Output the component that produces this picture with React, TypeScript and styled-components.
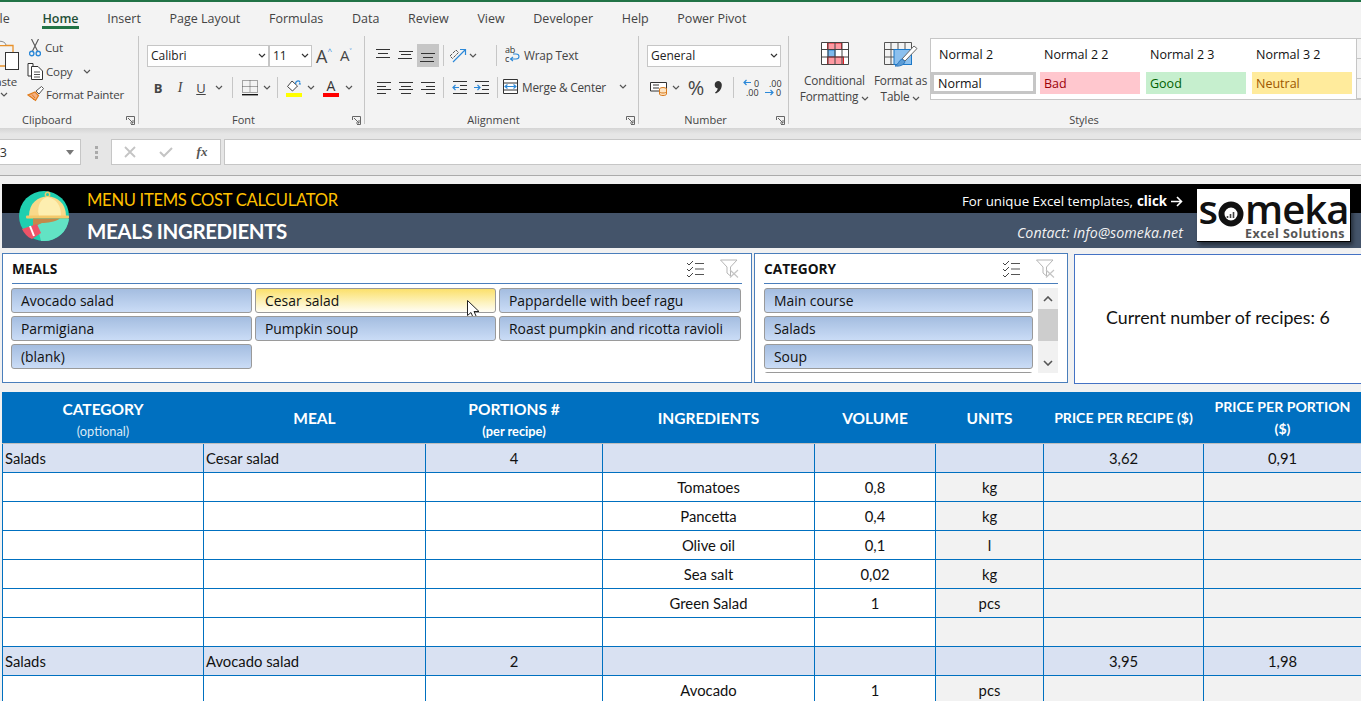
import React from 'react';
import styled, { createGlobalStyle } from 'styled-components';

const UI_FONT = '"Open Sans", "Noto Sans", sans-serif';
const SHEET_FONT = 'Lato, "Open Sans", sans-serif';
const GRID_BLUE = '#0070c0';

const GlobalStyle = createGlobalStyle`
  html, body {
    margin: 0;
    padding: 0;
    width: 1361px;
    height: 701px;
    overflow: hidden;
    background: #f1f1f1;
    font-family: ${UI_FONT};
  }
  * { box-sizing: border-box; }
`;

const Page = styled.div`
  width: 1361px;
  height: 701px;
  overflow: hidden;
`;

const TopStrip = styled.div`
  height: 2px;
  background: #217346;
`;

const Chrome = styled.div`
  width: 1400px;
  margin-left: -28px;
  background: #f3f3f3;
`;

const Tabs = styled.div`
  display: flex;
  height: 34px;
  padding-left: 18px;
`;

const Tab = styled.div<{ $active?: boolean }>`
  margin-right: 28.6px;
  padding-top: 8px;
  font-size: 12.5px;
  line-height: 18px;
  height: 27px;
  color: ${(p) => (p.$active ? '#1f4e36' : '#444')};
  font-weight: ${(p) => (p.$active ? 600 : 400)};
  border-bottom: ${(p) => (p.$active ? '3px solid #217346' : '0')};
  white-space: nowrap;
  &:first-child { margin-right: 32.6px; }
`;

const Ribbon = styled.div`
  display: flex;
  height: 92px;
  overflow: hidden;
  background: #f3f3f3;
`;

const Group = styled.div<{ $w: number; $plain?: boolean }>`
  flex: 0 0 ${(p) => p.$w}px;
  height: 88px;
  display: flex;
  flex-direction: column;
  border-right: ${(p) => (p.$plain ? '0' : '1px solid #c6c6c6')};
`;

const GroupBody = styled.div`
  flex: 1;
  min-height: 0;
`;

const GroupFoot = styled.div<{ $plain?: boolean }>`
  display: grid;
  grid-template-columns: ${(p) => (p.$plain ? '1fr' : '1fr 16px')};
  align-items: center;
  height: 16px;
  margin-bottom: -3px;
  font-size: 11px;
  color: #444;
  text-align: center;
`;

const LauncherWrap = styled.div`
  justify-self: end;
  margin: 2px 3px 0 0;
  line-height: 0;
`;

const Row = styled.div<{ $pad?: number; $top?: number }>`
  display: flex;
  align-items: center;
  height: 23px;
  padding-left: ${(p) => p.$pad ?? 0}px;
  margin-top: ${(p) => p.$top ?? 0}px;
`;

const Cell = styled.div<{ $w: number; $on?: boolean }>`
  flex: 0 0 ${(p) => p.$w}px;
  height: 23px;
  display: flex;
  align-items: center;
  justify-content: center;
  background: ${(p) => (p.$on ? '#c6c6c6' : 'transparent')};
  color: #444;
`;

const VSep = styled.div<{ $gap?: number; $right?: number }>`
  flex: 0 0 1px;
  height: 21px;
  margin-left: ${(p) => p.$gap ?? 5}px;
  margin-right: ${(p) => p.$right ?? p.$gap ?? 5}px;
  background: #c6c6c6;
`;

const Box = styled.div<{ $w: number }>`
  flex: 0 0 ${(p) => p.$w}px;
  height: 22px;
  display: flex;
  align-items: center;
  justify-content: space-between;
  padding: 0 2px 0 3px;
  background: #fff;
  border: 1px solid #c6c6c6;
  font-size: 12px;
  color: #222;
`;

const ClipBody = styled.div`
  display: flex;
  height: 100%;
`;

const PasteCol = styled.div`
  flex: 0 0 55px;
  display: flex;
  flex-direction: column;
  align-items: flex-end;
  padding: 4px 8px 0 0;
  font-size: 11.5px;
  letter-spacing: -0.2px;
  color: #444;
`;

const PasteLabel = styled.div`
  margin: 3px 2px 0 0;
  line-height: 16px;
`;

const PasteChevron = styled.div`
  align-self: flex-end;
  margin: 2px 11px 0 0;
  line-height: 0;
`;

const ClipRows = styled.div`
  display: flex;
  flex-direction: column;
`;

const ClipRow = styled.div`
  display: flex;
  align-items: center;
  height: 23.5px;
  gap: 2px;
  font-size: 11.6px;
  letter-spacing: -0.2px;
  color: #444;
  white-space: nowrap;
`;

const ClipIcon = styled.div`
  flex: 0 0 16px;
  display: flex;
  justify-content: center;
`;

const TextAction = styled.div`
  display: flex;
  align-items: center;
  gap: 4px;
  padding-bottom: 2px;
  font-size: 11.8px;
  letter-spacing: -0.2px;
  color: #444;
  white-space: nowrap;
`;

const BoldGlyph = styled.span`
  font: 700 13px ${UI_FONT};
  color: #444;
`;

const ItalicGlyph = styled.span`
  font: italic 400 14px "Liberation Serif", serif;
  color: #444;
`;

const UnderGlyph = styled.span`
  font: 400 13px ${UI_FONT};
  text-decoration: underline;
  color: #444;
`;

const ColorGlyph = styled.span<{ $bar: string }>`
  display: flex;
  flex-direction: column;
  align-items: center;
  font: 400 14px/15px ${UI_FONT};
  color: #333;
  &::after {
    content: '';
    width: 16px;
    height: 4px;
    background: ${(p) => p.$bar};
  }
`;

const SizeGlyph = styled.span<{ $size: number }>`
  display: flex;
  align-items: flex-start;
  font: 400 ${(p) => p.$size}px/1 ${UI_FONT};
  color: #444;
`;

const SizeCaret = styled.span`
  font-size: 8px;
  line-height: 8px;
  color: #2b88d8;
`;

const BigButtons = styled.div`
  display: flex;
  padding-left: 9px;
  height: 100%;
`;

const BigButton = styled.div<{ $w: number }>`
  flex: 0 0 ${(p) => p.$w}px;
  display: flex;
  flex-direction: column;
  align-items: center;
  padding-top: 6px;
  font-size: 11.8px;
  letter-spacing: -0.2px;
  line-height: 16px;
  color: #444;
  text-align: center;
  white-space: nowrap;
`;

const BigLabel = styled.div<{ $top: number }>`
  margin-top: ${(p) => p.$top}px;
`;

const Gallery = styled.div`
  flex: 0 0 432px;
  display: flex;
  height: 62px;
  margin-top: 2px;
  background: #fff;
  border: 1px solid #c6c6c6;
`;

const StyleGrid = styled.div`
  flex: 0 0 425px;
  display: grid;
  grid-template-columns: 109px 106px 106px 100px;
  grid-template-rows: 28px 22px;
  row-gap: 4px;
  align-content: start;
  padding-top: 1px;
`;

const StyleName = styled.div`
  display: flex;
  align-items: center;
  padding-left: 4px;
  font-size: 12.5px;
  color: #111;
  white-space: nowrap;
  &:first-child { padding-left: 8px; }
`;

const StyleSwatch = styled.div<{ $bg: string; $fg: string; $sel?: boolean }>`
  display: flex;
  align-items: center;
  width: ${(p) => (p.$sel ? 105 : 100)}px;
  padding-left: 4px;
  font-size: 12.5px;
  background: ${(p) => p.$bg};
  color: ${(p) => p.$fg};
  border: ${(p) => (p.$sel ? '3px solid #c6c6c6' : '0')};
`;

const GalleryScroll = styled.div`
  flex: 1;
  display: flex;
  flex-direction: column;
  background: #f3f3f3;
`;

const GalleryStep = styled.div`
  flex: 1;
  border-left: 1px solid #c6c6c6;
  border-bottom: 1px solid #c6c6c6;
`;

const FormulaBar = styled.div`
  display: flex;
  align-items: flex-start;
  height: 48px;
  padding-top: 11px;
  background: linear-gradient(#d4d4d4 0, #e6e6e6 6px);
  border-bottom: 1px solid #ababab;
`;

const NameBox = styled.div`
  flex: 0 0 109px;
  height: 26px;
  display: flex;
  align-items: center;
  justify-content: space-between;
  padding: 0 6px 0 19px;
  background: #fff;
  border: 1px solid #c6c6c6;
  font-size: 12.5px;
  color: #333;
`;

const DotsCell = styled.div`
  flex: 0 0 30px;
  height: 26px;
  display: flex;
  align-items: center;
  justify-content: center;
`;

const FxBox = styled.div`
  flex: 0 0 110px;
  height: 26px;
  display: grid;
  grid-template-columns: repeat(3, 36px);
  align-items: center;
  justify-items: center;
  background: #fff;
  border: 1px solid #c6c6c6;
`;

const FxGlyph = styled.span`
  font: italic 700 13px "Liberation Serif", serif;
  color: #555;
`;

const FormulaInput = styled.div`
  flex: 1;
  height: 26px;
  margin-left: 3px;
  background: #fff;
  border: 1px solid #c6c6c6;
`;

const Sheet = styled.div`
  padding: 8px 0 0 2px;
  width: 1361px;
  background: #f1f1f1;
`;

const Banner = styled.div`
  position: relative;
  width: 1359px;
`;

const BannerRow = styled.div<{ $dark?: boolean; $h: number }>`
  display: flex;
  align-items: center;
  justify-content: space-between;
  height: ${(p) => p.$h}px;
  padding: 0 178px 0 85px;
  background: ${(p) => (p.$dark ? '#000' : '#44546a')};
`;

const AppName = styled.div`
  margin-top: 2px;
  font: 400 16.6px ${SHEET_FONT};
  color: #ffc000;
  letter-spacing: -0.3px;
`;

const PageTitle = styled.div`
  font: 700 20.5px ${SHEET_FONT};
  color: #fff;
  letter-spacing: -0.4px;
`;

const Promo = styled.div`
  display: flex;
  align-items: center;
  gap: 4px;
  margin-top: 5px;
  font: 400 13.3px ${UI_FONT};
  color: #fff;
  b { font-weight: 700; }
`;

const Contact = styled.div`
  margin-top: 3px;
  font: italic 400 14.2px ${UI_FONT};
  letter-spacing: 0.1px;
  color: #f2f2f2;
`;

const BadgeIcon = styled.div`
  position: absolute;
  left: 17px;
  top: 7px;
  width: 50px;
  height: 50px;
`;

const Logo = styled.div`
  position: absolute;
  right: 10px;
  top: 5px;
  width: 154px;
  height: 53px;
  display: flex;
  flex-direction: column;
  align-items: center;
  background: #fff;
  border-right: 1px solid #000;
  border-bottom: 1px solid #000;
  box-shadow: 2px 3px 4px rgba(0, 0, 0, 0.45);
`;

const LogoWord = styled.div`
  display: flex;
  align-items: center;
  height: 38px;
  padding-top: 2px;
  font: 600 40px/36px "Open Sans", sans-serif;
  color: #111;
  letter-spacing: -1px;
`;

const LogoRing = styled.div`
  margin: 10px 1px 0;
  line-height: 0;
`;

const LogoSub = styled.div`
  align-self: flex-end;
  padding-right: 5px;
  font: 700 12.5px/14px "Open Sans", sans-serif;
  color: #555;
  letter-spacing: 0.45px;
`;

const SlicerRow = styled.div`
  display: flex;
  margin-top: 5px;
  height: 131px;
`;

const Panel = styled.div<{ $w: number; $gap: number }>`
  flex: 0 0 ${(p) => p.$w}px;
  height: 130px;
  margin-right: ${(p) => p.$gap}px;
  padding: 0 9px;
  background: #fff;
  border: 1px solid #4a7ebb;
`;

const PanelHead = styled.div`
  display: flex;
  align-items: center;
  justify-content: space-between;
  height: 30px;
  border-bottom: 1px solid #4a7ebb;
`;

const PanelTitle = styled.div`
  font: 700 13.7px ${UI_FONT};
  color: #111;
`;

const PanelTools = styled.div`
  display: flex;
  align-items: center;
  gap: 15px;
  padding-right: 3px;
`;

const MealGrid = styled.div`
  display: grid;
  grid-template-columns: 241px 241px 242px;
  grid-auto-rows: 25px;
  gap: 3px;
  margin: 4px 0 0 -1px;
`;

const SlicerItem = styled.div<{ $on?: boolean }>`
  position: relative;
  flex: 0 0 25px;
  display: flex;
  align-items: center;
  height: 25px;
  padding-left: 9px;
  border: 1px solid #9a9a9a;
  border-radius: 3px;
  background: ${(p) =>
    p.$on ? 'linear-gradient(#fbe06b, #fdf3c0 60%, #fffdf5)' : 'linear-gradient(#a4bde0, #cadcf6)'};
  font-size: 13.9px;
  color: #111;
  white-space: nowrap;
`;

const Pointer = styled.div`
  position: absolute;
  left: 211px;
  top: 11px;
  line-height: 0;
`;

const CatBody = styled.div`
  display: flex;
  gap: 5px;
  margin-top: 4px;
`;

const CatList = styled.div`
  flex: 0 0 269px;
  height: 85px;
  overflow: hidden;
  display: flex;
  flex-direction: column;
  gap: 3px;
`;

const ScrollTrack = styled.div`
  flex: 0 0 20px;
  height: 85px;
  display: flex;
  flex-direction: column;
  align-items: center;
  background: #f1f1f1;
`;

const ScrollArrow = styled.div`
  flex: 0 0 21px;
  display: flex;
  align-items: center;
  justify-content: center;
`;

const ScrollThumb = styled.div`
  align-self: stretch;
  flex: 0 0 32px;
  background: #cdcdcd;
`;

const ScrollGap = styled.div`
  flex: 1;
`;

const CountPanel = styled.div`
  flex: 0 0 320px;
  height: 130px;
  margin-top: 1px;
  display: flex;
  align-items: center;
  padding: 0 0 4px 31px;
  background: #fff;
  border: 1px solid #4472c4;
  font: 400 17.8px ${SHEET_FONT};
  color: #111;
  white-space: nowrap;
`;

const Table = styled.table`
  width: 1359px;
  margin-top: 8px;
  table-layout: fixed;
  border-collapse: collapse;
  font-family: ${SHEET_FONT};
`;

const Th = styled.th<{ $small?: boolean }>`
  height: 51px;
  padding: ${(p) => (p.$small ? '0' : '1px')} 0 0;
  background: ${GRID_BLUE};
  border: 1px solid ${GRID_BLUE};
  border-bottom: 1px solid #bfbfbf;
  color: #fff;
  font-size: ${(p) => (p.$small ? 14.1 : 15.5)}px;
  font-weight: 700;
  line-height: ${(p) => (p.$small ? 22 : 19)}px;
  text-align: center;
  vertical-align: middle;
`;

const ThNote = styled.div<{ $bold?: boolean }>`
  margin-top: 5px;
  font-size: 12.8px;
  line-height: 14px;
  font-weight: ${(p) => (p.$bold ? 700 : 400)};
  color: ${(p) => (p.$bold ? '#fff' : '#dbe9f6')};
`;

const Tr = styled.tr`
  height: 29px;
`;

const Td = styled.td<{ $head?: boolean; $shade?: boolean; $left?: boolean }>`
  height: 29px;
  padding: 4px ${(p) => (p.$left ? '2px' : '0')} 0;
  border: 1px solid ${GRID_BLUE};
  background: ${(p) => (p.$head ? '#d9e1f2' : p.$shade ? '#f2f2f2' : '#fff')};
  font-size: 14.8px;
  line-height: 20px;
  color: #111;
  text-align: ${(p) => (p.$left ? 'left' : 'center')};
  vertical-align: top;
  white-space: nowrap;
`;

const Chev = ({ c = '#555' }: { c?: string }) => (
  <svg width="8" height="5" viewBox="0 0 8 5">
    <path d="M1 1l3 3 3-3" fill="none" stroke={c} strokeWidth="1.2" />
  </svg>
);

const Launcher = () => (
  <LauncherWrap>
    <svg width="9" height="9" viewBox="0 0 9 9">
      <path d="M.5 4V.5H8.500V8.500H5M2 2l5 5M7 4v3H4" fill="none" stroke="#666" strokeWidth="1" />
    </svg>
  </LauncherWrap>
);

// each bar: [x1, x2, y]
const Bars = ({ bars, w = 16, h = 16 }: { bars: number[][]; w?: number; h?: number }) => (
  <svg width={w} height={h} viewBox={`0 0 ${w} ${h}`}>
    {bars.map((b, i) => (
      <rect key={i} x={b[0]} y={b[2]} width={b[1] - b[0]} height="1" fill="#333" />
    ))}
  </svg>
);

const PasteIcon = () => (
  <svg width="36" height="31" viewBox="0 0 36 31">
    <path d="M4 5.500H30V12M4 5V26H22" fill="none" stroke="#e8912a" strokeWidth="1.3" />
    <path d="M11 5c1-5 11-5 12 0" fill="#f3f3f3" stroke="#8a8a8a" />
    <rect x="22.500" y="12.500" width="13" height="17" fill="#fff" stroke="#333" />
  </svg>
);

const ScissorsIcon = () => (
  <svg width="12" height="18" viewBox="0 0 12 18">
    <path d="M2.500 0l6 12M9.500 0l-6 12" stroke="#555" strokeWidth="1.1" fill="none" />
    <circle cx="2.700" cy="14.500" r="2.200" fill="none" stroke="#2b88d8" strokeWidth="1.4" />
    <circle cx="9.300" cy="14.500" r="2.200" fill="none" stroke="#2b88d8" strokeWidth="1.4" />
  </svg>
);

const CopyIcon = () => (
  <svg width="17" height="17" viewBox="0 0 17 17">
    <path d="M6 3.500V.5H1V13H4" fill="#fff" stroke="#333" />
    <path d="M4.500 3.500H11L15.500 8V16.500H4.500Z" fill="#fff" stroke="#333" />
    <path d="M7 9h6M7 11.500h6M7 14h6" stroke="#555" />
  </svg>
);

const BrushIcon = () => (
  <svg width="17" height="17" viewBox="0 0 17 17">
    <path d="M8 6l3.500 3.500-3 5L1 9Z" fill="#f4b183" stroke="#e07b1a" strokeWidth="1.2" />
    <path d="M3 10l4 4M5 8.500l3 3.500" stroke="#e07b1a" />
    <path d="M9 5l5.500-4.500L16.500 2.500 12 8Z" fill="#fff" stroke="#555" />
  </svg>
);

const BordersIcon = () => (
  <svg width="16" height="16" viewBox="0 0 16 16">
    <path d="M.5.5H15.500V12.500H.5ZM8 .5V12.500M.5 6.500H15.500" fill="none" stroke="#555" strokeDasharray="1 1" />
    <rect x="0" y="14" width="16" height="1.400" fill="#111" />
  </svg>
);

const BucketIcon = () => (
  <svg width="16" height="18" viewBox="0 0 16 18">
    <path d="M6 2L1.500 7.500 6.500 12 11.500 7Z" fill="#fff" stroke="#444" />
    <path d="M9.500 5c0-3 3-4 4.500-2" fill="none" stroke="#2b88d8" strokeWidth="1.3" />
    <path d="M12.500 5.500l1.500-2.500 1 2.500Z" fill="#2b88d8" />
    <rect x="0" y="14" width="16" height="4" fill="#ffff00" />
  </svg>
);

const OrientIcon = () => (
  <svg width="18" height="18" viewBox="0 0 18 18">
    <path d="M1 9l6-6 2.500 2.500-6 6Z" fill="none" stroke="#555" strokeDasharray="3 1" />
    <path d="M4 15L16 3M11 2.500h5.500V8" fill="none" stroke="#2b88d8" strokeWidth="1.2" />
  </svg>
);

const IndentIcon = ({ out }: { out?: boolean }) => (
  <svg width="15" height="13" viewBox="0 0 15 13">
    <path d="M1 .5H15M8 4.500H15M8 8.500H15M1 12.500H15" stroke="#333" />
    {out ? (
      <path d="M7 6.500H1M3.500 4L1 6.500 3.500 9" fill="none" stroke="#2b88d8" strokeWidth="1.2" />
    ) : (
      <path d="M0 6.500H6M3.500 4L6 6.500 3.500 9" fill="none" stroke="#2b88d8" strokeWidth="1.2" />
    )}
  </svg>
);

const WrapIcon = () => (
  <svg width="15" height="17" viewBox="0 0 15 17">
    <text x="0" y="7" fontSize="9" fill="#333" fontFamily="Open Sans">ab</text>
    <text x="0" y="16" fontSize="9" fill="#333" fontFamily="Open Sans">c</text>
    <path d="M6 13h5c4 0 4-5 0-5H8M8 11l-2.500 2L8 15" fill="none" stroke="#2b88d8" strokeWidth="1.1" />
  </svg>
);

const MergeIcon = () => (
  <svg width="15" height="15" viewBox="0 0 15 15">
    <path d="M.5.5H14.500V14.500H.5Z" fill="#fff" stroke="#333" />
    <path d="M.5 4H14.500M.5 11H14.500" stroke="#333" />
    <path d="M2 7.500H13M4.500 5.500L2 7.500l2.500 2M10.500 5.500L13 7.500l-2.500 2" fill="none" stroke="#2b88d8" strokeWidth="1.1" />
  </svg>
);

const AccountingIcon = () => (
  <svg width="18" height="16" viewBox="0 0 18 16">
    <path d="M.5 2.500H16.500V11H.5Z" fill="#fff" stroke="#333" />
    <path d="M3 5H9M3 8H9" stroke="#333" />
    <ellipse cx="13" cy="9" rx="3.500" ry="1.500" fill="#fce4c4" stroke="#d9791a" />
    <path d="M9.500 9V14c0 2 7 2 7 0V9M9.500 11.500c0 2 7 2 7 0" fill="#fce4c4" stroke="#d9791a" />
  </svg>
);

const CommaIcon = () => (
  <svg width="8" height="13" viewBox="0 0 8 13">
    <path d="M4 0a3.800 3.800 0 0 1 3.800 4c0 4-3 7.500-6 8.500L1 11.500c1.500-1 2.500-2.500 2.800-4A3.800 3.800 0 0 1 4 0Z" fill="#333" />
  </svg>
);

const DecimalIcon = ({ more }: { more?: boolean }) => (
  <svg width="17" height="17" viewBox="0 0 17 17">
    {more ? (
      <path d="M8 3.500H1M3.500 1L1 3.500 3.500 6" fill="none" stroke="#2b88d8" strokeWidth="1.2" />
    ) : (
      <path d="M0 13.500H8M5.500 11L8 13.500 5.500 16" fill="none" stroke="#2b88d8" strokeWidth="1.2" />
    )}
    <text x={more ? 11 : 4} y="7.500" fontSize="9" fill="#333" fontFamily="Open Sans">{more ? '0' : '.00'}</text>
    <text x={more ? 3 : 11} y="16.500" fontSize="9" fill="#333" fontFamily="Open Sans">{more ? '.00' : '0'}</text>
  </svg>
);

const TableCells = ({ fills }: { fills: React.ReactNode }) => (
  <svg width="28" height="23" viewBox="0 0 28 23">
    <rect x=".5" y=".5" width="27" height="22" fill="#fff" />
    {fills}
    <path d="M.5.5H27.500V22.500H.5ZM.5 7.500H27.500M.5 15H27.500M7 .5V22.500M14 .5V22.500M21 .5V22.500" fill="none" stroke="#444" />
  </svg>
);

const CondFormatIcon = () => (
  <TableCells
    fills={
      <>
        <rect x="6.500" y="1" width="14" height="6.500" fill="#ff9aa2" stroke="#e01f26" />
        <rect x="7" y="8" width="7" height="7" fill="#7db9ec" stroke="#2b88d8" />
        <rect x="6.500" y="15" width="16" height="7.500" fill="#ff9aa2" stroke="#e01f26" />
      </>
    }
  />
);

const FormatTableIcon = () => (
  <svg width="34" height="26" viewBox="0 0 34 26">
    <path d="M.5.5H27.500V22.500H.5ZM.5 7.500H27.500M.5 15H27.500M7 .5V22.500M14 .5V22.500M21 .5V22.500" fill="none" stroke="#555" />
    <rect x="10" y="7.500" width="17.500" height="15" fill="#8cc0ee" stroke="#1b78c8" />
    <path d="M18 17L30 4l3 2.500L21 19Z" fill="#fff" stroke="#666" />
    <path d="M18 17l3 2.500c-1 4-6 5-10 4.500 3-1 4-6 7-7Z" fill="#5b9bd5" stroke="#2b78c0" />
  </svg>
);

const ChecklistIcon = () => (
  <svg width="19" height="17" viewBox="0 0 19 17">
    <path d="M1 3l2 2 4-4M1 9l2 2 4-4M1 15l2 2 4-4" fill="none" stroke="#444" />
    <path d="M9 3.500H18M9 9H18M9 14.500H18" stroke="#555" strokeWidth="1.1" />
  </svg>
);

const ClearFilterIcon = () => (
  <svg width="19" height="19" viewBox="0 0 19 19">
    <path d="M.5 1H17L10.500 8V17L7 14V8Z" fill="none" stroke="#b5b5b5" />
    <path d="M10 11l8 7.500M18 11l-8 7.500" stroke="#c4c4c4" strokeWidth="1.2" />
  </svg>
);

const ArrowRight = () => (
  <svg width="12" height="11" viewBox="0 0 12 11">
    <path d="M0 5.500H10.500M6 1l4.500 4.500L6 10" fill="none" stroke="#fff" strokeWidth="1.6" />
  </svg>
);

const CursorIcon = () => (
  <svg width="14" height="20" viewBox="0 0 14 20">
    <path d="M.5.5V15.500L4 12.500 6.500 18.500 9.500 17 7 11.500H12Z" fill="#fff" stroke="#222" />
  </svg>
);

const ClocheBadge = () => (
  <svg width="50" height="50" viewBox="0 0 50 50">
    <circle cx="25" cy="25" r="25" fill="#1fcfb0" />
    <path d="M25 50A25 25 0 0 0 50 28H30L18 34 22 50Z" fill="#62e3c4" />
    <circle cx="28.500" cy="3.500" r="2.200" fill="none" stroke="#f0c868" strokeWidth="1.400" />
    <path d="M10 25C10 12 19 5.500 28.500 5.500S47 12 47 25Z" fill="#f9d98a" />
    <path d="M20 25C17 14 23 7 28.500 6 38 8 42 15 42 25Z" fill="#fdeeb0" />
    <rect x="7" y="24.500" width="43" height="3" rx="1" fill="#f5c96a" />
    <path d="M14 27.500H41C36 31 28 32 23 32L14 36Z" fill="#c4894a" />
    <path d="M3 38l15-5 4 9-9 6C8 46 5 42 3 38Z" fill="#ee5367" />
    <path d="M11 35l4 10" stroke="#fff" strokeWidth="2" />
  </svg>
);

const LogoO = () => (
  <LogoRing>
    <svg width="26" height="26" viewBox="0 0 26 26">
      <circle cx="13" cy="13" r="9.500" fill="none" stroke="#111" strokeWidth="6" />
      <path d="M9.500 17v-2M12.500 17v-4M15.500 17v-6" stroke="#444" strokeWidth="1.600" />
    </svg>
  </LogoRing>
);

const ALIGN_TOP = [[0, 14, 1], [2, 12, 5], [0, 14, 9]];
const ALIGN_MID = [[1, 15, 3], [3, 13, 6], [0, 14, 10]];
const ALIGN_BOT = [[1, 15, 5], [3, 13, 9], [0, 14, 13]];
const H_LEFT = [[1, 15, 2], [1, 10, 6], [1, 15, 9], [1, 10, 13]];
const H_CENTER = [[1, 15, 2], [3, 13, 6], [1, 15, 9], [3, 13, 13]];
const H_RIGHT = [[1, 15, 2], [6, 15, 6], [1, 15, 9], [6, 15, 13]];

const MEALS = [
  'Avocado salad',
  'Cesar salad',
  'Pappardelle with beef ragu',
  'Parmigiana',
  'Pumpkin soup',
  'Roast pumpkin and ricotta ravioli',
  '(blank)',
];

const CATEGORIES = ['Main course', 'Salads', 'Soup', ''];

const COLUMN_WIDTHS = [201, 222, 177, 212, 121, 108, 160, 158];

type RecipeRow = string[];

const ROWS: RecipeRow[] = [
  ['Salads', 'Cesar salad', '4', '', '', '', '3,62', '0,91'],
  ['', '', '', 'Tomatoes', '0,8', 'kg', '', ''],
  ['', '', '', 'Pancetta', '0,4', 'kg', '', ''],
  ['', '', '', 'Olive oil', '0,1', 'l', '', ''],
  ['', '', '', 'Sea salt', '0,02', 'kg', '', ''],
  ['', '', '', 'Green Salad', '1', 'pcs', '', ''],
  ['', '', '', '', '', '', '', ''],
  ['Salads', 'Avocado salad', '2', '', '', '', '3,95', '1,98'],
  ['', '', '', 'Avocado', '1', 'pcs', '', ''],
];

const STYLE_NAMES = ['Normal 2', 'Normal 2 2', 'Normal 2 3', 'Normal 3 2'];

export default function App() {
  return (
    <Page>
      <GlobalStyle />
      <TopStrip />
      <Chrome>
        <Tabs>
          <Tab>File</Tab>
          <Tab $active>Home</Tab>
          <Tab>Insert</Tab>
          <Tab>Page Layout</Tab>
          <Tab>Formulas</Tab>
          <Tab>Data</Tab>
          <Tab>Review</Tab>
          <Tab>View</Tab>
          <Tab>Developer</Tab>
          <Tab>Help</Tab>
          <Tab>Power Pivot</Tab>
        </Tabs>

        <Ribbon>
          <Group $w={167}>
            <GroupBody>
              <ClipBody>
                <PasteCol>
                  <PasteIcon />
                  <PasteLabel>Paste</PasteLabel>
                  <PasteChevron><Chev /></PasteChevron>
                </PasteCol>
                <ClipRows>
                  <ClipRow><ClipIcon><ScissorsIcon /></ClipIcon>Cut</ClipRow>
                  <ClipRow><ClipIcon><CopyIcon /></ClipIcon>Copy&nbsp;&nbsp;&nbsp;<Chev /></ClipRow>
                  <ClipRow><ClipIcon><BrushIcon /></ClipIcon>Format Painter</ClipRow>
                </ClipRows>
              </ClipBody>
            </GroupBody>
            <GroupFoot><span>Clipboard</span><Launcher /></GroupFoot>
          </Group>

          <Group $w={226}>
            <GroupBody>
              <Row $pad={8} $top={8}>
                <Box $w={122}>Calibri<Chev c="#333" /></Box>
                <Box $w={43}>11<Chev c="#333" /></Box>
                <Cell $w={24}><SizeGlyph $size={18}>A<SizeCaret>^</SizeCaret></SizeGlyph></Cell>
                <Cell $w={20}><SizeGlyph $size={15}>A<SizeCaret>˅</SizeCaret></SizeGlyph></Cell>
              </Row>
              <Row $pad={8} $top={9}>
                <Cell $w={22}><BoldGlyph>B</BoldGlyph></Cell>
                <Cell $w={22}><ItalicGlyph>I</ItalicGlyph></Cell>
                <Cell $w={20}><UnderGlyph>U</UnderGlyph></Cell>
                <Cell $w={16}><Chev /></Cell>
                <VSep />
                <Cell $w={24}><BordersIcon /></Cell>
                <Cell $w={10}><Chev /></Cell>
                <VSep />
                <Cell $w={22}><BucketIcon /></Cell>
                <Cell $w={12}><Chev /></Cell>
                <Cell $w={28}><ColorGlyph $bar="#ff0000">A</ColorGlyph></Cell>
                <Cell $w={8}><Chev /></Cell>
              </Row>
            </GroupBody>
            <GroupFoot><span>Font</span><Launcher /></GroupFoot>
          </Group>

          <Group $w={274}>
            <GroupBody>
              <Row $pad={8} $top={8}>
                <Cell $w={22}><Bars bars={ALIGN_TOP} /></Cell>
                <Cell $w={22}><Bars bars={ALIGN_MID} /></Cell>
                <Cell $w={22} $on><Bars bars={ALIGN_BOT} /></Cell>
                <VSep $gap={4} />
                <Cell $w={20}><OrientIcon /></Cell>
                <Cell $w={10}><Chev /></Cell>
                <VSep $gap={18} $right={8} />
                <TextAction><WrapIcon />Wrap Text</TextAction>
              </Row>
              <Row $pad={8} $top={9}>
                <Cell $w={22}><Bars bars={H_LEFT} /></Cell>
                <Cell $w={22}><Bars bars={H_CENTER} /></Cell>
                <Cell $w={22}><Bars bars={H_RIGHT} /></Cell>
                <VSep $gap={4} />
                <Cell $w={22}><IndentIcon out /></Cell>
                <Cell $w={22}><IndentIcon /></Cell>
                <VSep $gap={5} />
                <TextAction><MergeIcon />Merge &amp; Center&nbsp;&nbsp;&nbsp;<Chev /></TextAction>
              </Row>
            </GroupBody>
            <GroupFoot><span>Alignment</span><Launcher /></GroupFoot>
          </Group>

          <Group $w={150}>
            <GroupBody>
              <Row $pad={8} $top={8}>
                <Box $w={134}>General<Chev c="#333" /></Box>
              </Row>
              <Row $pad={10} $top={9}>
                <Cell $w={20}><AccountingIcon /></Cell>
                <Cell $w={14}><Chev /></Cell>
                <Cell $w={26}><SizeGlyph $size={20}>%</SizeGlyph></Cell>
                <Cell $w={18}><CommaIcon /></Cell>
                <VSep $gap={6} />
                <Cell $w={22}><DecimalIcon more /></Cell>
                <Cell $w={22}><DecimalIcon /></Cell>
              </Row>
            </GroupBody>
            <GroupFoot><span>Number</span><Launcher /></GroupFoot>
          </Group>

          <Group $w={590} $plain>
            <GroupBody>
              <BigButtons>
                <BigButton $w={73}>
                  <CondFormatIcon />
                  <BigLabel $top={7}>Conditional<br />Formatting <Chev /></BigLabel>
                </BigButton>
                <BigButton $w={59}>
                  <FormatTableIcon />
                  <BigLabel $top={4}>Format as<br />Table <Chev /></BigLabel>
                </BigButton>
                <Gallery>
                  <StyleGrid>
                    {STYLE_NAMES.map((name) => (
                      <StyleName key={name}>{name}</StyleName>
                    ))}
                    <StyleSwatch $bg="#fff" $fg="#111" $sel>Normal</StyleSwatch>
                    <StyleSwatch $bg="#ffc7ce" $fg="#9c0006">Bad</StyleSwatch>
                    <StyleSwatch $bg="#c6efce" $fg="#006100">Good</StyleSwatch>
                    <StyleSwatch $bg="#ffeb9c" $fg="#9c5700">Neutral</StyleSwatch>
                  </StyleGrid>
                  <GalleryScroll>
                    <GalleryStep />
                    <GalleryStep />
                    <GalleryStep />
                  </GalleryScroll>
                </Gallery>
              </BigButtons>
            </GroupBody>
            <GroupFoot $plain><span>Styles</span></GroupFoot>
          </Group>
        </Ribbon>

        <FormulaBar>
          <NameBox>
            C3
            <svg width="8" height="5" viewBox="0 0 8 5"><path d="M0 0h8L4 5Z" fill="#777" /></svg>
          </NameBox>
          <DotsCell>
            <svg width="3" height="13" viewBox="0 0 3 13">
              <path d="M0 0h3v3H0ZM0 5h3v3H0ZM0 10h3v3H0Z" fill="#aaa" />
            </svg>
          </DotsCell>
          <FxBox>
            <svg width="12" height="12" viewBox="0 0 12 12">
              <path d="M1 1l10 10M11 1L1 11" stroke="#c4c4c4" strokeWidth="1.8" />
            </svg>
            <svg width="14" height="12" viewBox="0 0 14 12">
              <path d="M1 6l4 4 8-8" fill="none" stroke="#c4c4c4" strokeWidth="2" />
            </svg>
            <FxGlyph>fx</FxGlyph>
          </FxBox>
          <FormulaInput />
        </FormulaBar>
      </Chrome>

      <Sheet>
        <Banner>
          <BannerRow $dark $h={29}>
            <AppName>MENU ITEMS COST CALCULATOR</AppName>
            <Promo>For unique Excel templates, <b>click</b> <ArrowRight /></Promo>
          </BannerRow>
          <BannerRow $h={35}>
            <PageTitle>MEALS INGREDIENTS</PageTitle>
            <Contact>Contact: info@someka.net</Contact>
          </BannerRow>
          <BadgeIcon><ClocheBadge /></BadgeIcon>
          <Logo>
            <LogoWord>s<LogoO />meka</LogoWord>
            <LogoSub>Excel Solutions</LogoSub>
          </Logo>
        </Banner>

        <SlicerRow>
          <Panel $w={750} $gap={2}>
            <PanelHead>
              <PanelTitle>MEALS</PanelTitle>
              <PanelTools><ChecklistIcon /><ClearFilterIcon /></PanelTools>
            </PanelHead>
            <MealGrid>
              {MEALS.map((meal) => (
                <SlicerItem key={meal} $on={meal === 'Cesar salad'}>
                  {meal}
                  {meal === 'Cesar salad' && <Pointer><CursorIcon /></Pointer>}
                </SlicerItem>
              ))}
            </MealGrid>
          </Panel>

          <Panel $w={313} $gap={6}>
            <PanelHead>
              <PanelTitle>CATEGORY</PanelTitle>
              <PanelTools><ChecklistIcon /><ClearFilterIcon /></PanelTools>
            </PanelHead>
            <CatBody>
              <CatList>
                {CATEGORIES.map((cat, i) => (
                  <SlicerItem key={i}>{cat}</SlicerItem>
                ))}
              </CatList>
              <ScrollTrack>
                <ScrollArrow>
                  <svg width="10" height="6" viewBox="0 0 10 6"><path d="M1 5l4-4 4 4" fill="none" stroke="#555" strokeWidth="1.6" /></svg>
                </ScrollArrow>
                <ScrollThumb />
                <ScrollGap />
                <ScrollArrow>
                  <svg width="10" height="6" viewBox="0 0 10 6"><path d="M1 1l4 4 4-4" fill="none" stroke="#555" strokeWidth="1.6" /></svg>
                </ScrollArrow>
              </ScrollTrack>
            </CatBody>
          </Panel>

          <CountPanel>Current number of recipes: 6</CountPanel>
        </SlicerRow>

        <Table>
          <colgroup>
            {COLUMN_WIDTHS.map((w, i) => (
              <col key={i} width={w} />
            ))}
          </colgroup>
          <thead>
            <tr>
              <Th>CATEGORY<ThNote>(optional)</ThNote></Th>
              <Th>MEAL</Th>
              <Th>PORTIONS #<ThNote $bold>(per recipe)</ThNote></Th>
              <Th>INGREDIENTS</Th>
              <Th>VOLUME</Th>
              <Th>UNITS</Th>
              <Th $small>PRICE PER RECIPE ($)</Th>
              <Th $small>PRICE PER PORTION<br />($)</Th>
            </tr>
          </thead>
          <tbody>
            {ROWS.map((row, r) => {
              const isHead = row[0] !== '';
              return (
                <Tr key={r}>
                  {row.map((text, c) => (
                    <Td key={c} $head={isHead} $left={c < 2} $shade={c >= 5}>
                      {text}
                    </Td>
                  ))}
                </Tr>
              );
            })}
          </tbody>
        </Table>
      </Sheet>
    </Page>
  );
}
